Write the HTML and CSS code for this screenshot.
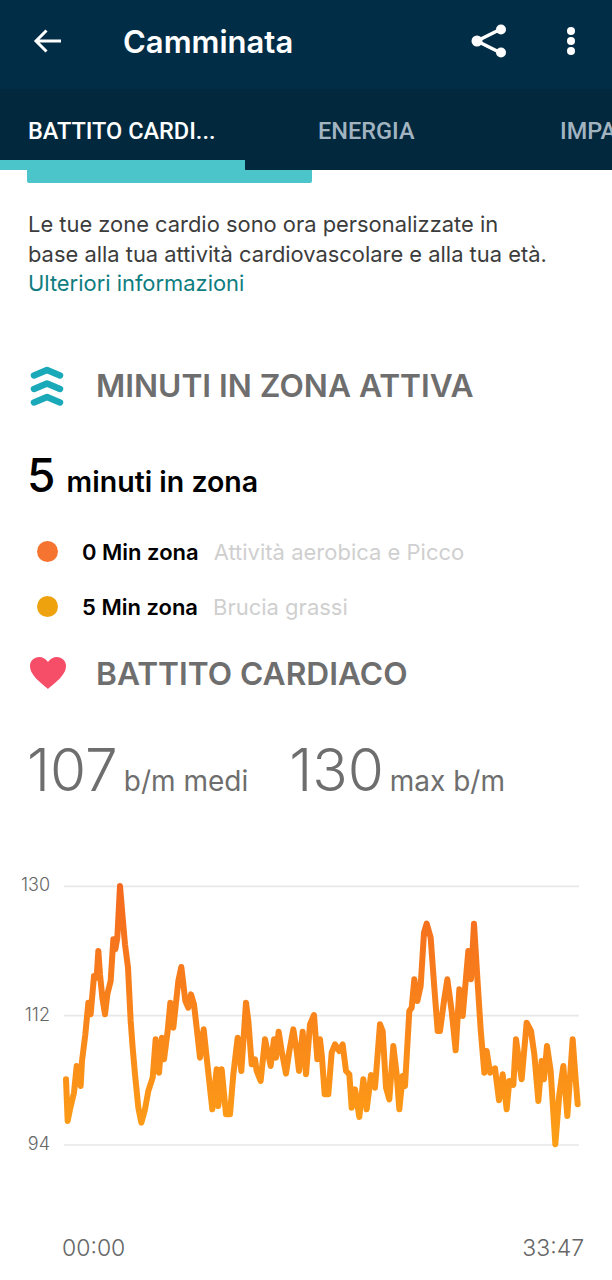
FILE: index.html
```html
<!DOCTYPE html>
<html>
<head>
  <title>Camminata</title>
  <link rel="stylesheet" href="styles.css">
</head>
<body>
  <!-- Top bar -->
  <header class="topbar">
    <svg class="icon-back" width="30" height="26" viewBox="0 0 30 26">
      <path d="M28 13H3M13.500 2.500L3 13l10.500 10.500" fill="none" stroke="#fff" stroke-width="3"/>
    </svg>
    <div class="title">Camminata</div>
    <svg class="icon-share" width="36" height="36" viewBox="0 0 36 36">
      <path d="M30 6L6 18l24 12" fill="none" stroke="#fff" stroke-width="3.500"/>
      <circle cx="30" cy="6.500" r="5" fill="#fff"/>
      <circle cx="6" cy="18" r="5.500" fill="#fff"/>
      <circle cx="30" cy="29.500" r="5" fill="#fff"/>
    </svg>
    <div class="dots">
      <span></span>
      <span></span>
      <span></span>
    </div>
  </header>

  <!-- Tabs -->
  <nav class="tabs">
    <div class="tab tab-active">BATTITO CARDI...</div>
    <div class="tab tab-energy">ENERGIA</div>
    <div class="tab tab-impact">IMPA</div>
    <div class="tab-indicator"></div>
  </nav>
  <div class="tab-shadow"></div>

  <!-- Intro text -->
  <p class="intro">
    Le tue zone cardio sono ora personalizzate in<br>
    base alla tua attività cardiovascolare e alla tua età.<br>
    <a class="link">Ulteriori informazioni</a>
  </p>

  <!-- Active zone minutes -->
  <section class="section-head head-zone">
    <svg class="section-icon" width="36" height="42" viewBox="0 0 36 42">
      <g fill="none" stroke="#1aa9b8" stroke-width="6.500" stroke-linecap="round" stroke-linejoin="round">
        <path d="M5 10.500L18 5l13 5.500"/>
        <path d="M5 24L18 18.500l13 5.500"/>
        <path d="M5 37.500L18 32l13 5.500"/>
      </g>
    </svg>
    <h2>MINUTI IN ZONA ATTIVA</h2>
  </section>

  <div class="zone-total"><span class="big-five">5</span> minuti in zona</div>

  <div class="zone-row zone-first">
    <span class="dot dot-orange"></span>
    <span class="zone-min">0 Min zona</span>
    <span class="zone-name">Attività aerobica e Picco</span>
  </div>
  <div class="zone-row zone-second">
    <span class="dot dot-yellow"></span>
    <span class="zone-min">5 Min zona</span>
    <span class="zone-name">Brucia grassi</span>
  </div>

  <!-- Heart rate -->
  <section class="section-head head-heart">
    <svg class="section-icon" width="38" height="34" viewBox="0 0 38 34">
      <path d="M19 33C14 28 1 20 1 10 1 4.500 5.500 1 10 1c4 0 7 2 9 5 2-3 5-5 9-5 4.500 0 9 3.500 9 9 0 10-13 18-18 23z" fill="#f64d69"/>
    </svg>
    <h2>BATTITO CARDIACO</h2>
  </section>

  <div class="stats">
    <span class="stat-num">107</span><span class="stat-label stat-gap">b/m medi</span>
    <span class="stat-num">130</span><span class="stat-label">max b/m</span>
  </div>

  <!-- Chart, drawn at 3x units -->
  <svg class="chart" width="612" height="300" viewBox="0 0 1836 900">
    <defs>
      <linearGradient id="lineColor" gradientUnits="userSpaceOnUse" x1="0" y1="70" x2="0" y2="850">
        <stop offset="0" stop-color="#f4691f"/>
        <stop offset="1" stop-color="#fd9f16"/>
      </linearGradient>
    </defs>
    <path class="grid" d="M192 76H1737M192 464H1737M192 852H1737"/>
    <text class="axis" x="150" y="91" text-anchor="end">130</text>
    <text class="axis" x="150" y="479" text-anchor="end">112</text>
    <text class="axis" x="150" y="867" text-anchor="end">94</text>
    <polyline class="line" stroke="url(#lineColor)" points="198,655 203,780 210,745 222,695 230,615 236,650 242,675 246,600 256,520 265,425 272,460 282,345 290,350 295,270 300,340 307,410 315,460 322,400 332,360 340,235 346,265 352,230 360,75 368,170 375,250 384,320 392,480 398,560 405,640 415,740 424,785 435,745 445,690 458,650 467,535 477,635 486,530 492,595 503,510 511,425 520,500 535,360 544,318 556,420 565,440 573,400 582,430 590,500 600,590 611,505 620,590 637,745 650,625 655,735 665,625 678,760 690,760 700,640 713,530 724,630 738,425 745,480 755,610 765,595 770,630 782,660 795,535 812,615 822,535 828,590 836,512 845,570 858,638 868,570 880,505 890,570 897,630 908,512 918,640 930,490 942,462 952,595 960,535 966,590 974,700 985,700 995,575 1005,550 1018,570 1028,550 1038,630 1048,640 1055,740 1065,685 1078,768 1090,655 1100,745 1113,642 1125,680 1140,490 1148,510 1158,680 1168,715 1180,555 1190,640 1198,745 1208,645 1215,675 1228,450 1235,440 1243,355 1252,420 1262,375 1272,215 1280,188 1292,230 1303,380 1313,510 1320,510 1332,420 1342,355 1355,450 1367,568 1378,385 1388,465 1405,270 1413,355 1422,188 1432,350 1442,505 1453,635 1460,570 1470,635 1485,622 1497,718 1508,640 1520,745 1528,660 1540,672 1548,535 1565,655 1580,485 1593,510 1603,580 1615,720 1625,600 1632,655 1641,555 1652,630 1666,850 1678,700 1690,615 1702,765 1718,535 1725,630 1733,730"/>
  </svg>

  <div class="times">
    <span>00:00</span>
    <span>33:47</span>
  </div>
</body>
</html>
```

FILE: styles.css
```css
/* Page */
body {
  margin: 0;
  background-color: #fff;
  font-family: Inter, Lato, sans-serif;
  height: 1280px;
  overflow: hidden;
}

/* Top bar */
.topbar {
  display: flex;
  align-items: center;
  box-sizing: border-box;
  height: 89px;
  padding-bottom: 7px;
  background-color: #022d47;
  color: #fff;
}

.icon-back {
  margin-left: 33px;
}

.title {
  margin-left: 60px;
  font-size: 31px;
  font-weight: 600;
  flex: 1;
}

.icon-share {
  margin-right: 60px;
}

.dots {
  display: flex;
  flex-direction: column;
  gap: 2px;
  margin-right: 37px;
}

.dots span {
  width: 8px;
  height: 8px;
  border-radius: 50%;
  background-color: #fff;
}

/* Tabs */
.tabs {
  position: relative;
  display: flex;
  height: 81px;
  background-color: #02283e;
  font-family: Roboto, sans-serif;
  font-size: 23.500px;
  font-weight: 500;
  overflow: hidden;
}

.tab {
  flex-shrink: 0;
  padding-top: 28px;
  white-space: nowrap;
  color: #a3b4c1;
}

.tab-active {
  width: 290px;
  padding-left: 28px;
  color: #fff;
  box-sizing: border-box;
}

.tab-energy {
  width: 242px;
  padding-left: 28px;
  box-sizing: border-box;
}

.tab-impact {
  padding-left: 28px;
}

.tab-indicator {
  position: absolute;
  left: 0;
  bottom: 0;
  width: 245px;
  height: 10px;
  background-color: #4cc5ca;
}

.tab-shadow {
  width: 285px;
  height: 13px;
  margin-left: 27px;
  background-color: #4cc5ca;
  border-radius: 0 0 2px 2px;
}

/* Intro text */
.intro {
  margin: 27px 0 0 28px;
  font-size: 21.900px;
  line-height: 29.500px;
  color: #3c3c3c;
}

.link {
  color: #0e7d80;
}

/* Section headings */
.section-head {
  display: flex;
  align-items: center;
  padding-left: 29px;
}

.section-head h2 {
  margin: 0 0 0 31px;
  font-size: 31.700px;
  font-weight: 600;
  color: #6e6e6e;
}

.head-zone {
  margin-top: 66px;
}

.head-heart {
  margin-top: 32px;
}

.head-heart h2 {
  margin-left: 29px;
}

/* Zone summary */
.zone-total {
  margin: 40px 0 0 27px;
  font-size: 28.500px;
  font-weight: 600;
  color: #000;
}

.big-five {
  font-size: 46px;
  font-weight: 500;
  margin-right: 4px;
}

.zone-row {
  display: flex;
  align-items: center;
  padding-left: 37px;
  height: 30px;
  font-size: 22px;
}

.zone-first {
  margin-top: 34px;
}

.zone-second {
  margin-top: 25px;
}

.dot {
  width: 21px;
  height: 21px;
  border-radius: 50%;
}

.dot-orange {
  background-color: #f47430;
}

.dot-yellow {
  background-color: #eea20e;
}

.zone-min {
  margin-left: 24px;
  font-weight: 600;
  color: #000;
}

.zone-name {
  margin-left: 15px;
  color: #cfcfcf;
}

/* Stats */
.stats {
  display: flex;
  align-items: baseline;
  margin: 41px 0 0 27px;
  color: #6e6e6e;
}

.stat-num {
  font-size: 58.500px;
  font-weight: 300;
}

.stat-label {
  margin-left: 6px;
  font-size: 28px;
  font-weight: 400;
}

.stat-gap {
  margin-right: 41px;
}

/* Chart */
.chart {
  display: block;
  margin-top: 56px;
}

.grid {
  stroke: #e8e8e8;
  stroke-width: 5;
  fill: none;
}

.axis {
  font-size: 54px;
  font-weight: 300;
  fill: #666;
}

.line {
  fill: none;
  stroke-width: 18;
  stroke-linejoin: round;
  stroke-linecap: round;
}

/* Time labels */
.times {
  display: flex;
  justify-content: space-between;
  margin: 73px 28px 0 62px;
  font-size: 23px;
  font-weight: 300;
  color: #666;
}
```
